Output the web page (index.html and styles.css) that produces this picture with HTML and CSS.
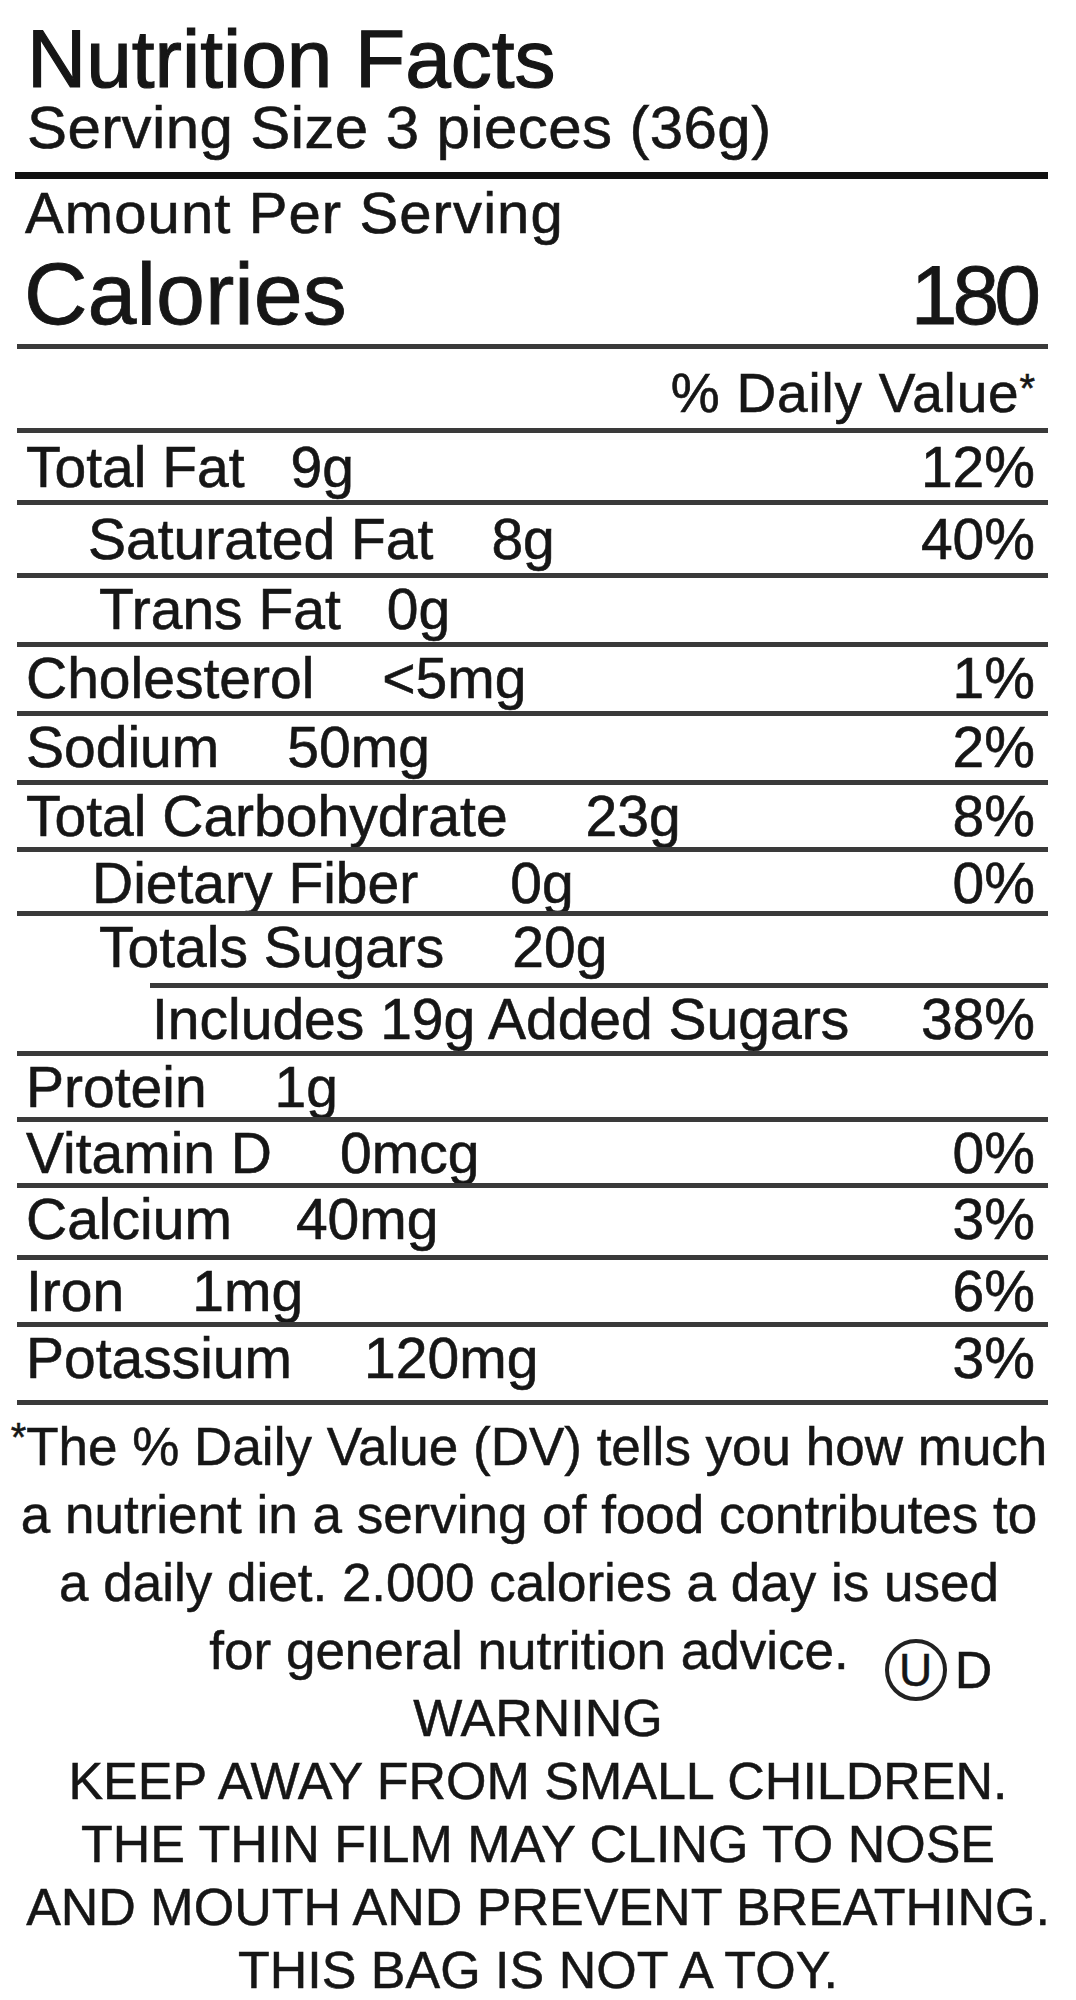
FILE: index.html
```html
<!DOCTYPE html>
<html lang="en">
<head>
<meta charset="utf-8">
<title>Nutrition Facts</title>
<link rel="stylesheet" href="styles.css">
</head>
<body>
<div class="label">
  <h1 class="title">Nutrition Facts</h1>
  <p class="serving">Serving Size 3 pieces (36g)</p>
  <div class="rule-thick"></div>
  <p class="amount">Amount Per Serving</p>
  <div class="calories"><span class="cal-name">Calories</span><span class="cal-val">180</span></div>

  <div class="table">
    <div class="row dv-head"><span></span><span class="dv">% Daily Value<span class="dv-ast">*</span></span></div>
    <div class="row low"><span class="name gap-s"><span>Total Fat</span><span>9g</span></span><span class="pct">12%</span></div>
    <div class="row low sub-sat"><span class="name gap-m"><span>Saturated Fat</span><span>8g</span></span><span class="pct">40%</span></div>
    <div class="row sub-trans"><span class="name gap-s"><span>Trans Fat</span><span>0g</span></span><span class="pct"></span></div>
    <div class="row"><span class="name"><span>Cholesterol</span><span>&lt;5mg</span></span><span class="pct">1%</span></div>
    <div class="row"><span class="name"><span>Sodium</span><span>50mg</span></span><span class="pct">2%</span></div>
    <div class="row"><span class="name gap-w"><span>Total Carbohydrate</span><span>23g</span></span><span class="pct">8%</span></div>
    <div class="row sub-fiber"><span class="name gap-l"><span>Dietary Fiber</span><span>0g</span></span><span class="pct">0%</span></div>
    <div class="row sub-sugar"><span class="name"><span>Totals Sugars</span><span>20g</span></span><span class="pct"></span></div>
    <div class="row added"><span class="name"><span>Includes 19g Added Sugars</span></span><span class="pct">38%</span></div>
    <div class="row"><span class="name"><span>Protein</span><span>1g</span></span><span class="pct"></span></div>
    <div class="row"><span class="name"><span>Vitamin D</span><span>0mcg</span></span><span class="pct">0%</span></div>
    <div class="row"><span class="name gap-n"><span>Calcium</span><span>40mg</span></span><span class="pct">3%</span></div>
    <div class="row"><span class="name"><span>Iron</span><span>1mg</span></span><span class="pct">6%</span></div>
    <div class="row"><span class="name gap-p"><span>Potassium</span><span>120mg</span></span><span class="pct">3%</span></div>
  </div>

  <p class="foot">
    <span class="ast">*</span>The % Daily Value (DV) tells you how much<br>
    a nutrient in a serving of food contributes to<br>
    a daily diet. 2.000 calories a day is used<br>
    <span class="adv">for general nutrition advice.<span class="ud"><span class="ud-circle">U</span><span class="ud-d">D</span></span></span>
  </p>

  <p class="warn">
    WARNING<br>
    KEEP AWAY FROM SMALL CHILDREN.<br>
    THE THIN FILM MAY CLING TO NOSE<br>
    AND MOUTH AND PREVENT BREATHING.<br>
    THIS BAG IS NOT A TOY.
  </p>
</div>
</body>
</html>
```

FILE: styles.css
```css
* {
  box-sizing: border-box;
  margin: 0;
  padding: 0;
}

html, body {
  background: #ffffff;
}

body {
  margin: 0;
  width: 1076px;
  color: #161616;
  font-family: "Liberation Sans", Arial, Helvetica, sans-serif;
  overflow: hidden;
}

.label {
  width: 1076px;
  padding-top: 18px;
}

.title {
  font-size: 82px;
  font-weight: 400;
  line-height: 82px;
  padding-left: 27px;
  -webkit-text-stroke: 1.2px #161616;
}

.serving {
  font-size: 60px;
  line-height: 56px;
  padding-left: 27px;
  letter-spacing: 0.4px;
  -webkit-text-stroke: 0.6px #161616;
}

.rule-thick {
  height: 7px;
  margin: 16px 28px 0 15px;
  background: #111;
}

.amount {
  margin-top: 4px;
  font-size: 58px;
  line-height: 60px;
  padding-left: 25px;
  letter-spacing: 1.1px;
  -webkit-text-stroke: 0.6px #161616;
}

.calories {
  margin: 7px 28px 0 17px;
  display: flex;
  justify-content: space-between;
  align-items: baseline;
  font-size: 88px;
  line-height: 88px;
  padding: 0 12px 0 7px;
  -webkit-text-stroke: 0.8px #161616;
}

.cal-val {
  font-size: 84px;
  letter-spacing: -5px;
}

.table {
  margin: 5px 28px 0 17px;
  display: grid;
  grid-template-rows: 84px 71.5px 73.5px 69px 69px 69px 67px 64px 72px 68px 66px 66px 72px 67px 78px;
  border-bottom: 5px solid #3a3a3a;
}

.row {
  border-top: 5px solid #3a3a3a;
  display: flex;
  justify-content: space-between;
  align-items: flex-start;
  padding: 0 13px 0 9px;
  font-size: 57px;
  line-height: 62px;
  white-space: nowrap;
  -webkit-text-stroke: 0.6px #161616;
}

.row.low {
  padding-top: 3px;
}

.dv-head {
  padding-top: 8px;
  font-size: 55px;
}

.dv {
  letter-spacing: 0.8px;
}

.dv-ast {
  font-size: 40px;
  vertical-align: 10px;
  letter-spacing: 0;
}

.name {
  display: flex;
  gap: 68px;
}

.name.gap-s {
  gap: 46px;
}

.name.gap-m {
  gap: 58px;
}

.name.gap-n {
  gap: 64px;
}

.name.gap-p {
  gap: 72px;
}

.name.gap-w {
  gap: 78px;
}

.name.gap-l {
  gap: 92px;
}

.sub-sat {
  padding-left: 71px;
}

.sub-trans {
  padding-left: 82px;
}

.sub-sugar {
  padding-left: 82px;
}

.sub-fiber {
  padding-left: 75px;
}

.added {
  margin-left: 133px;
  padding-left: 2px;
}

.foot {
  width: 1058px;
  margin-top: 8px;
  text-align: center;
  font-size: 53px;
  line-height: 68px;
  -webkit-text-stroke: 0.5px #161616;
}

.ast {
  font-size: 40px;
  vertical-align: 14px;
  line-height: 0;
}

.adv {
  position: relative;
  display: inline-block;
}

.ud {
  position: absolute;
  left: 100%;
  top: 22px;
  margin-left: 36px;
  display: flex;
  align-items: center;
  gap: 8px;
  line-height: 1;
}

.ud-circle {
  width: 62px;
  height: 62px;
  border: 4px solid #222;
  border-radius: 50%;
  display: flex;
  align-items: center;
  justify-content: center;
  font-size: 46px;
}

.ud-d {
  font-size: 52px;
}

.warn {
  margin-top: 2px;
  text-align: center;
  font-size: 52px;
  line-height: 63px;
  -webkit-text-stroke: 0.5px #161616;
}
```
